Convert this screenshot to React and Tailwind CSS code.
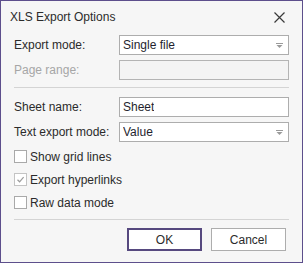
function DropArrow() {
  return (
    <svg width="7" height="5" viewBox="0 0 7 5" className="shrink-0" aria-hidden="true">
      <rect x="0" y="0" width="7" height="1" fill="#9a9a9a" />
      <path d="M0.5 2 L6.5 2 L3.5 5 Z" fill="#9a9a9a" />
    </svg>
  );
}

function CloseIcon() {
  return (
    <svg width="11" height="11" viewBox="0 0 11 11" aria-hidden="true">
      <path d="M0.5 0.5 L10.5 10.5 M10.5 0.5 L0.5 10.5" stroke="#3a3a3a" strokeWidth="1.2" fill="none" />
    </svg>
  );
}

function Field({ label, value, disabled, combo }) {
  return (
    <div className="flex h-[20px] items-center">
      <span className={`w-[105px] shrink-0 ${disabled ? "text-[#a6a6a6]" : "text-[#2b2b2b]"}`}>{label}</span>
      <div
        className={`flex h-[20px] w-[170px] items-center justify-between border pl-[3px] pr-[5px] ${
          disabled ? "border-[#b4b4b4] bg-[#f4f4f4]" : "border-[#adadad] bg-white"
        }`}
      >
        <span className="truncate text-[#1f1f2e]">{value}</span>
        {combo && <DropArrow />}
      </div>
    </div>
  );
}

function Check({ label, checked }) {
  return (
    <div className="flex h-[13px] items-center gap-[3px]">
      <span
        className={`flex h-[13px] w-[13px] shrink-0 items-center justify-center border bg-white ${
          checked ? "border-[#c4c4c4]" : "border-[#a9a9a9]"
        }`}
      >
        {checked && (
          <svg width="9" height="9" viewBox="0 0 9 9" aria-hidden="true">
            <path d="M1.5 4.8 L3.6 6.8 L7.6 2.2" fill="none" stroke="#9c9c9c" strokeWidth="1.2" />
          </svg>
        )}
      </span>
      <span className="text-[#2b2b2b]">{label}</span>
    </div>
  );
}

export default function App() {
  return (
    <div
      className="flex h-[263px] w-[303px] flex-col border border-[#5d4f8c] bg-[#f6f6f6] text-[12px] leading-[14px]"
      style={{ fontFamily: '"Liberation Sans", Arial, sans-serif' }}
    >
      <div className="flex h-[34px] shrink-0 items-center justify-between pb-[2px] pl-[9px] pr-[17px]">
        <span className="text-[#2b2b2b]">XLS Export Options</span>
        <CloseIcon />
      </div>

      <div className="flex flex-col px-[13px]">
        <div className="flex flex-col gap-[5px]">
          <Field label="Export mode:" value="Single file" combo />
          <Field label="Page range:" value="" disabled />
        </div>

        <div className="mb-[9px] mt-[7px] h-px w-[275px] bg-[#d4d4d4]" />

        <div className="flex flex-col gap-[5px]">
          <Field label="Sheet name:" value="Sheet" />
          <Field label="Text export mode:" value="Value" combo />
        </div>

        <div className="mt-[8px] flex flex-col gap-[10px]">
          <Check label="Show grid lines" />
          <Check label="Export hyperlinks" checked />
          <Check label="Raw data mode" />
        </div>

        <div className="mt-[10px] h-px w-[275px] bg-[#d4d4d4]" />

        <div className="mt-[8px] flex justify-end gap-[9px] pr-[3px]">
          <button
            type="button"
            className="flex h-[23px] w-[75px] items-center justify-center border-2 border-[#56497f] bg-white text-[#2b2b2b]"
          >
            OK
          </button>
          <button
            type="button"
            className="flex h-[23px] w-[75px] items-center justify-center border border-[#adadad] bg-white text-[#2b2b2b]"
          >
            Cancel
          </button>
        </div>
      </div>
    </div>
  );
}
